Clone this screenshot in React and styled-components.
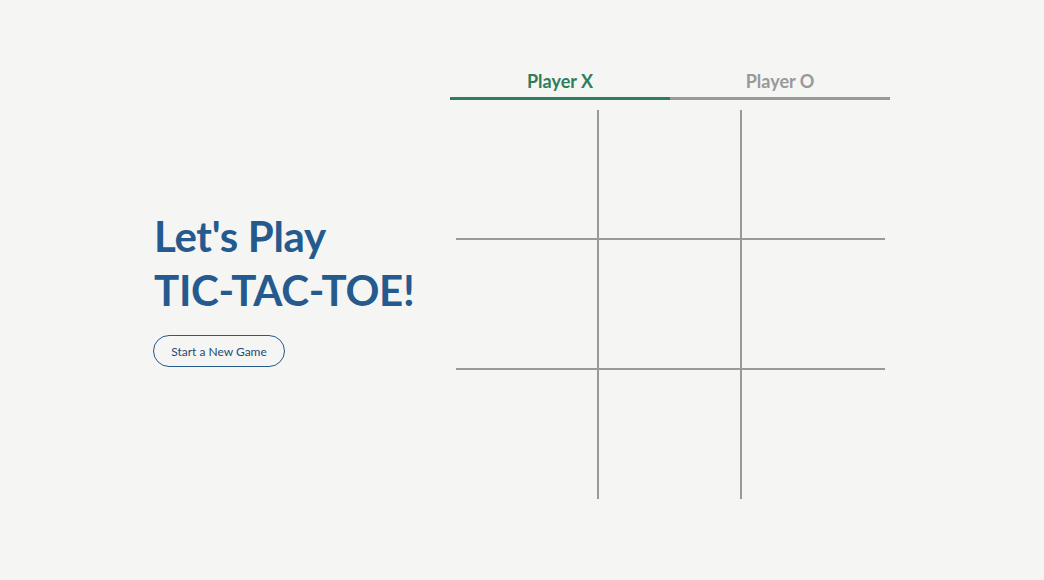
import React, { useState } from 'react';
import styled, { createGlobalStyle } from 'styled-components';

const GlobalStyle = createGlobalStyle`
    html, body {
        margin: 0;
        padding: 0;
        background: #f5f5f3;
    }
    * {
        box-sizing: border-box;
    }
`;

const Page = styled.div`
    min-height: 580px;
    display: flex;
    align-items: flex-start;
    padding: 69px 0 0 153px;
    font-family: Lato, "Noto Sans", sans-serif;
`;

const Intro = styled.div`
    width: 297px;
    padding-top: 140px;
`;

const Title = styled.h1`
    margin: 0 0 0 1px;
    font-size: 42px;
    line-height: 54px;
    font-weight: 700;
    letter-spacing: -0.3px;
    color: #245a8e;
`;

const StartButton = styled.button`
    margin-top: 18px;
    width: 132px;
    height: 32px;
    border: 1px solid #245a8e;
    border-radius: 16px;
    background: transparent;
    color: #1f4b76;
    font-family: Lato, "Noto Sans", sans-serif;
    font-size: 12px;
    cursor: pointer;
`;

const GameArea = styled.div`
    width: 440px;
`;

const Tabs = styled.div`
    display: flex;
`;

const Tab = styled.div`
    flex: 1;
    text-align: center;
    font-size: 18px;
    line-height: 24px;
    font-weight: 700;
    padding-bottom: 4px;
    color: ${(p) => (p.$active ? '#2e7d5b' : '#999999')};
    border-bottom: 3px solid ${(p) => (p.$active ? '#2e7d5b' : '#999999')};
`;

const Board = styled.div`
    width: 429px;
    margin: 10px auto 0;
    display: grid;
    grid-template-columns: repeat(3, 143px);
    grid-template-rows: 130px 130px 129px;
`;

const Cell = styled.div`
    display: flex;
    align-items: center;
    justify-content: center;
    font-size: 64px;
    font-weight: 700;
    color: ${(p) => (p.$mark === 'X' ? '#2e7d5b' : '#245a8e')};
    cursor: pointer;
    border-right: ${(p) => (p.$col < 2 ? '2px solid #999999' : 'none')};
    border-bottom: ${(p) => (p.$row < 2 ? '2px solid #999999' : 'none')};
`;

const App = () => {
    const [cells, setCells] = useState(Array(9).fill(null));
    const [turn, setTurn] = useState('X');

    const handleCellClick = (i) => {
        if (cells[i]) return;
        const next = cells.slice();
        next[i] = turn;
        setCells(next);
        setTurn(turn === 'X' ? 'O' : 'X');
    };

    const reset = () => {
        setCells(Array(9).fill(null));
        setTurn('X');
    };

    return (
        <>
            <GlobalStyle />
            <Page>
                <Intro>
                    <Title>
                        Let's Play
                        <br />
                        TIC-TAC-TOE!
                    </Title>
                    <StartButton onClick={reset}>Start a New Game</StartButton>
                </Intro>
                <GameArea>
                    <Tabs>
                        <Tab $active={turn === 'X'}>Player X</Tab>
                        <Tab $active={turn === 'O'}>Player O</Tab>
                    </Tabs>
                    <Board>
                        {cells.map((c, i) => (
                            <Cell
                                key={i}
                                $row={Math.floor(i / 3)}
                                $col={i % 3}
                                $mark={c}
                                onClick={() => handleCellClick(i)}
                            >
                                {c}
                            </Cell>
                        ))}
                    </Board>
                </GameArea>
            </Page>
        </>
    );
};

export default App;
